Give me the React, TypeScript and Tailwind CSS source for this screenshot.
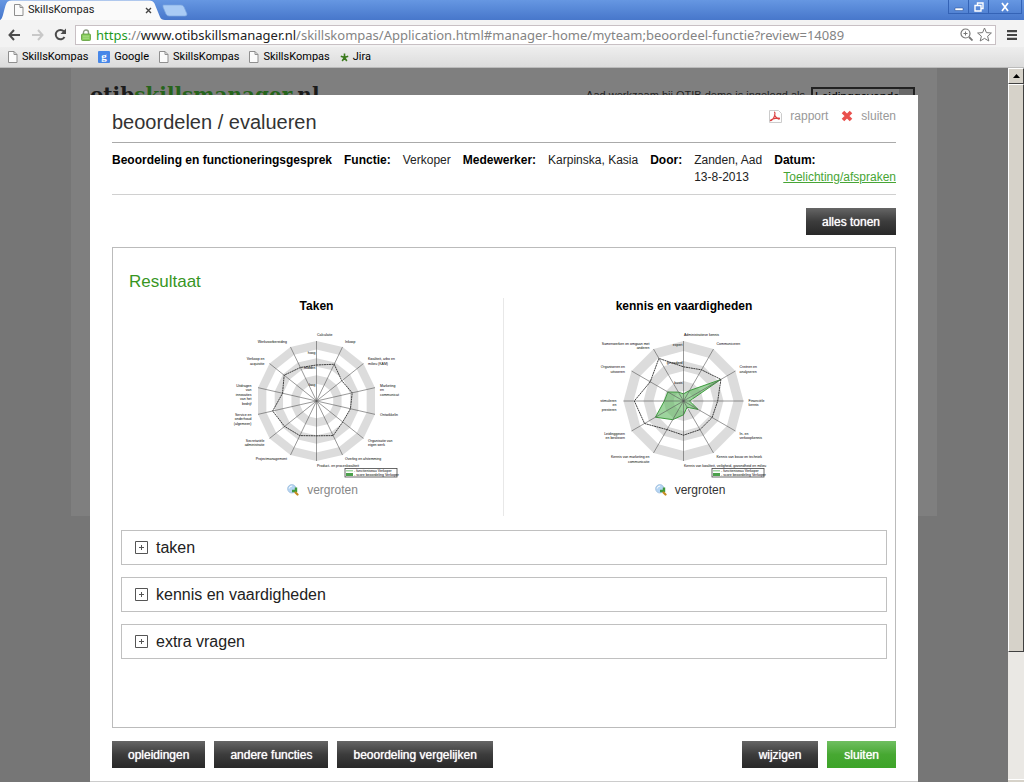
import React from "react";

type Anchor = "start" | "middle" | "end";
interface Label {
  x: number;
  y: number;
  anchor: Anchor;
  lines: string[];
}
interface RadarProps {
  title: string;
  axes: number;
  bands: number;
  cx: number;
  labels: Label[];
  scale: { y: number; text: string }[];
  line: number[];
  area?: number[];
}

// Chart units are half a pixel, so the small captions can use whole sizes.
const R = 120;
const CY = 146;

function points(values: number[], cx: number) {
  return values
    .map((v, i) => {
      const a = (i * 2 * Math.PI) / values.length;
      return `${(cx + Math.sin(a) * v * R).toFixed(1)},${(CY - Math.cos(a) * v * R).toFixed(1)}`;
    })
    .join(" ");
}

function Radar({ title, axes, bands, cx, labels, scale, line, area }: RadarProps) {
  const ring = (v: number) => points(Array(axes).fill(v), cx);
  const legendX = 246;
  return (
    <svg viewBox="0 0 380 304" className="block h-[152px] w-[190px] shrink-0" role="img" aria-label={title}>
      {Array.from({ length: bands }, (_, i) => (
        <polygon key={i} points={ring((bands - i) / bands)} fill={i % 2 || i === bands - 1 ? "#fff" : "#dcdcdc"} />
      ))}
      {area && <polygon points={points(area, cx)} fill="#5cb85c" fillOpacity="0.6" stroke="#3f9a3f" strokeWidth="2" />}
      {Array.from({ length: axes }, (_, i) => {
        const a = (i * 2 * Math.PI) / axes;
        return (
          <line key={i} x1={cx} y1={CY} x2={cx + Math.sin(a) * R} y2={CY - Math.cos(a) * R} stroke="#555" strokeWidth="1.2" />
        );
      })}
      <polygon points={points(line, cx)} fill="none" stroke="#222" strokeWidth="1.7" strokeDasharray="4 1" />
      <g fontSize="7" fill="#000" fontFamily="Liberation Sans, sans-serif">
        {scale.map((s) => (
          <text key={s.text} x={cx - 2} y={s.y} textAnchor="end">
            {s.text}
          </text>
        ))}
        {labels.map((l) =>
          l.lines.map((t, i) => (
            <text key={t} x={l.x} y={l.y + i * 9} textAnchor={l.anchor}>
              {t}
            </text>
          )),
        )}
        <rect x={legendX} y="281" width="104" height="17" fill="#fff" stroke="#444" strokeWidth="1.6" />
        <rect x={legendX + 2} y="284" width="14" height="3" fill="#a5d5a5" />
        <rect x={legendX + 2} y="290" width="14" height="6" fill="#4ba04b" />
        <text x={legendX + 18} y="288">- functieniveau Verkoper</text>
        <text x={legendX + 18} y="296">- score beoordeling Verkoper</text>
      </g>
    </svg>
  );
}

const taken: RadarProps = {
  title: "Taken",
  axes: 14,
  bands: 7,
  cx: 189,
  line: [0.6, 0.68, 0.54, 0.61, 0.58, 0.56, 0.64, 0.58, 0.64, 0.68, 0.75, 0.58, 0.69, 0.62],
  scale: [
    { y: 52, text: "hoog" },
    { y: 82, text: "midden" },
    { y: 116, text: "laag" },
  ],
  labels: [
    { x: 190, y: 15, anchor: "start", lines: ["Calculatie"] },
    { x: 246, y: 29, anchor: "start", lines: ["Inkoop"] },
    { x: 292, y: 64, anchor: "start", lines: ["Kwaliteit, arbo en", "milieu (KAM)"] },
    { x: 316, y: 117, anchor: "start", lines: ["Marketing", "en", "communicat"] },
    { x: 316, y: 175, anchor: "start", lines: ["Ontwikkelin"] },
    { x: 292, y: 227, anchor: "start", lines: ["Organisatie van", "eigen werk"] },
    { x: 246, y: 263, anchor: "start", lines: ["Overleg en afstemming"] },
    { x: 190, y: 277, anchor: "start", lines: ["Product- en proceskwaliteit"] },
    { x: 130, y: 263, anchor: "end", lines: ["Projectmanagement"] },
    { x: 85, y: 227, anchor: "end", lines: ["Secretariële", "administratie"] },
    { x: 59, y: 175, anchor: "end", lines: ["Service en", "onderhoud", "(algemeen)"] },
    { x: 59, y: 117, anchor: "end", lines: ["Uitdragen", "van", "innovaties", "van het", "bedrijf"] },
    { x: 85, y: 64, anchor: "end", lines: ["Verkoop en", "acquisitie"] },
    { x: 130, y: 29, anchor: "end", lines: ["Werkvoorbereiding"] },
  ],
};

const kennis: RadarProps = {
  title: "kennis en vaardigheden",
  axes: 12,
  bands: 6,
  cx: 189,
  line: [0.57, 0.6, 0.72, 0.57, 0.55, 0.55, 0.57, 0.55, 0.75, 0.82, 0.64, 0.82],
  area: [0.12, 0.2, 0.71, 0.1, 0.28, 0.12, 0.23, 0.36, 0.54, 0.32, 0.3, 0.17],
  scale: [
    { y: 36, text: "expert" },
    { y: 72, text: "gevorderd" },
    { y: 112, text: "basis" },
  ],
  labels: [
    { x: 190, y: 15, anchor: "start", lines: ["Administratieve kennis"] },
    { x: 255, y: 33, anchor: "start", lines: ["Communiceren"] },
    { x: 301, y: 80, anchor: "start", lines: ["Creëren en", "analyseren"] },
    { x: 319, y: 147, anchor: "start", lines: ["Financiële", "kennis"] },
    { x: 301, y: 213, anchor: "start", lines: ["In- en", "verkoopkennis"] },
    { x: 255, y: 260, anchor: "start", lines: ["Kennis van bouw en techniek"] },
    { x: 190, y: 277, anchor: "start", lines: ["Kennis van kwaliteit, veiligheid, gezondheid en milieu"] },
    { x: 121, y: 260, anchor: "end", lines: ["Kennis van marketing en", "communicatie"] },
    { x: 72, y: 213, anchor: "end", lines: ["Leidinggeven", "en beslissen"] },
    { x: 55, y: 147, anchor: "end", lines: ["stimuleren", "en", "presteren"] },
    { x: 72, y: 80, anchor: "end", lines: ["Organiseren en", "uitvoeren"] },
    { x: 121, y: 33, anchor: "end", lines: ["Samenwerken en omgaan met", "anderen"] },
  ],
};

function PageIcon() {
  return (
    <svg viewBox="0 0 10 12" className="h-3 w-[10px] shrink-0" aria-hidden="true">
      <path d="M.5.5h5.5l3 3v8H.5z" fill="#fbfbfb" stroke="#8f8f8f" />
      <path d="M6 .5v3h3" fill="none" stroke="#8f8f8f" />
    </svg>
  );
}

function MagnifierIcon() {
  return (
    <svg viewBox="0 0 12 12" className="size-3 shrink-0" aria-hidden="true">
      <circle cx="4.800" cy="4.800" r="4.200" fill="#b5d5f3" stroke="#9ab9d8" strokeWidth=".7" />
      <path d="M2.200 4.500a3 3 0 0 1 3-2.500" fill="none" stroke="#fff" strokeWidth="1" />
      <path d="M5 7h4V3.500" fill="none" stroke="#3f9a3d" strokeWidth="2.400" />
      <path d="M8.500 8.500l2 2" stroke="#c48a1d" strokeWidth="2.200" strokeLinecap="round" />
    </svg>
  );
}

function Bookmark({ label, icon }: { label: string; icon: React.ReactNode }) {
  return (
    <a href="#" className="flex items-center gap-1 whitespace-nowrap text-black">
      {icon}
      {label}
    </a>
  );
}

interface ActionButtonProps {
  children: React.ReactNode;
  green?: boolean;
  wide?: boolean;
}

function ActionButton({ children, green = false, wide = false }: ActionButtonProps) {
  const tone = green
    ? "from-[#6fbf60] via-[#47a832] to-[#3da428]"
    : "from-[#666] via-[#3c3c3c] to-[#282828]";
  return (
    <button
      type="button"
      className={`h-[27px] whitespace-nowrap bg-linear-to-b text-xs font-normal text-white [text-shadow:0_0_1px_#fff] ${wide ? "px-[17px]" : "px-4"} ${tone}`}
    >
      {children}
    </button>
  );
}

function ChartPanel({ chart, muted = false }: { chart: RadarProps; muted?: boolean }) {
  return (
    <section className="flex h-[218px] flex-col items-center">
      <h3 className="text-xs leading-4 font-bold text-black">{chart.title}</h3>
      <div className="mt-[14px]">
        <Radar {...chart} />
      </div>
      <button type="button" className={`mt-[2px] flex items-center gap-2 pl-3 text-xs leading-4 ${muted ? "text-[#888]" : "text-[#333]"}`}>
        <MagnifierIcon />
        vergroten
      </button>
    </section>
  );
}

function Browser() {
  return (
    <header className="font-['Roboto',sans-serif] text-[11px]">
      <div className="flex h-5 items-end bg-linear-to-b from-[#6697e2] to-[#4777cb]">
        <svg viewBox="0 0 190 20" className="h-5 w-[190px] shrink-0" aria-hidden="true">
          <path d="M0 20C4 19 4 4 8 1.500Q9 .5 12 .5H149Q153 .5 154.500 3.500L160 17Q161 20 165 20z" fill="#fafafa" />
          <path d="M163 5H181Q183 5 184 7L187 14Q187 16 185 16H169Q167 16 166 14L163 7z" fill="#a9cbf5" stroke="#7da7df" strokeWidth=".7" />
        </svg>
        <div className="-ml-[190px] flex h-5 w-[152px] items-center gap-1 pl-[14px]">
          <PageIcon />
          <span className="flex-1 leading-4">SkillsKompas</span>
          <button type="button" aria-label="Tabblad sluiten" className="text-[#444]">
            <svg viewBox="0 0 7 7" className="size-[7px]"><path d="M1 1l5 5M6 1L1 6" stroke="currentColor" strokeWidth="1.400" /></svg>
          </button>
        </div>
        <div className="mr-[2px] ml-auto flex h-[14px] self-start border border-t-0 border-[#3463b6] text-white">
          <button type="button" aria-label="Minimaliseren" className="flex w-5 items-center justify-center border-r border-[#3463b6]">
            <svg viewBox="0 0 10 10" className="size-[10px]"><path d="M1 6h8v2.500H1z" fill="#fff" stroke="#234a91" strokeWidth=".5" /></svg>
          </button>
          <button type="button" aria-label="Herstellen" className="flex w-5 items-center justify-center border-r border-[#3463b6]">
            <svg viewBox="0 0 10 10" className="size-[10px]" fill="none"><path d="M3.500 3V1h5.500v5.500H7M1 3.500h6V9H1z" stroke="#fff" strokeWidth="1.400" /></svg>
          </button>
          <button type="button" aria-label="Venster sluiten" className="flex w-8 items-center justify-center">
            <svg viewBox="0 0 10 10" className="size-[10px]"><path d="M2 1l6 8M8 1L2 9" stroke="#fff" strokeWidth="1.700" /></svg>
          </button>
        </div>
      </div>
      <div className="flex h-[27px] items-center bg-[#f3f3f3] pt-[2px] pl-2">
        <div className="flex w-[67px] items-center gap-[10px]">
          <button type="button" aria-label="Vorige">
            <svg viewBox="0 0 13 12" className="h-3 w-[13px]" fill="none"><path d="M6 1L1.500 6 6 11M1.500 6H12" stroke="#4c4c4c" strokeWidth="2" /></svg>
          </button>
          <button type="button" aria-label="Volgende">
            <svg viewBox="0 0 13 12" className="h-3 w-[13px]" fill="none"><path d="M7 1l4.500 5L7 11M11.500 6H1" stroke="#c8c8c8" strokeWidth="2" /></svg>
          </button>
          <button type="button" aria-label="Vernieuwen">
            <svg viewBox="0 0 13 13" className="size-[13px]"><path d="M10.500 9A4.700 4.700 0 1 1 10 3.500" fill="none" stroke="#4c4c4c" strokeWidth="2" /><path d="M12 .5V6H6.500z" fill="#4c4c4c" /></svg>
          </button>
        </div>
        <div className="flex h-5 flex-1 items-center border border-[#c8c0c4] bg-white pr-[3px] pl-[5px]">
          <svg viewBox="0 0 10 12" className="h-3 w-[10px] shrink-0" aria-hidden="true">
            <path d="M2.500 6V3.500a2.500 2.500 0 0 1 5 0V6" fill="none" stroke="#8a9a80" strokeWidth="1.400" />
            <rect x=".5" y="5" width="9" height="6.500" rx="1" fill="#86cc5a" stroke="#5d9c3a" strokeWidth=".8" />
            <path d="M2 7.200h6M2 9.200h6" stroke="#bce59f" strokeWidth=".7" />
          </svg>
          <span className="ml-[5px] flex-1 overflow-hidden font-['Noto_Sans',sans-serif] text-[13px] leading-[18px] whitespace-nowrap text-[#848484]">
            <span className="text-[#1f9a1f]">https</span>://<span className="text-[#222]">www.otibskillsmanager.nl</span>/skillskompas/Application.html#manager-home/myteam;beoordeel-functie?review=14089
          </span>
          <svg viewBox="0 0 13 13" className="size-[13px] shrink-0" fill="none" stroke="#777" aria-hidden="true">
            <circle cx="5.500" cy="5.500" r="4.500" strokeWidth="1.200" /><path d="M5.500 3.500v4M3.500 5.500h4" /><path d="M9 9l3.500 3.500" strokeWidth="1.800" />
          </svg>
          <svg viewBox="0 0 15 15" className="ml-1 size-[15px] shrink-0" fill="#fff" stroke="#777" aria-hidden="true">
            <path d="M7.500 1l1.900 4.600 5 .4-3.800 3.200 1.200 4.800-4.300-2.600L3.200 14l1.200-4.800L.6 6l5-.4z" />
          </svg>
        </div>
        <button type="button" aria-label="Menu" className="mr-[7px] ml-[11px]">
          <svg viewBox="0 0 10 10" className="size-[10px]"><path d="M0 1.200h10M0 5h10M0 8.800h10" stroke="#444" strokeWidth="2.200" /></svg>
        </button>
      </div>
      <nav className="flex h-[21px] items-center gap-[10px] border-b border-[#bbb] bg-linear-to-b from-[#eee] to-[#dcdcdc] pl-2">
        <Bookmark label="SkillsKompas" icon={<PageIcon />} />
        <Bookmark
          label="Google"
          icon={<svg viewBox="0 0 12 12" className="size-3" aria-hidden="true"><rect width="12" height="12" rx="1" fill="#4787e8" /><text x="6" y="9" fontSize="11" fontWeight="bold" fontFamily="Liberation Serif, serif" fill="#fff" textAnchor="middle">g</text></svg>}
        />
        <Bookmark label="SkillsKompas" icon={<PageIcon />} />
        <Bookmark label="SkillsKompas" icon={<PageIcon />} />
        <Bookmark
          label="Jira"
          icon={<svg viewBox="0 0 9 9" className="size-[9px]" aria-hidden="true"><path d="M4.500 4.500V.5M4.500 4.500L.8 3.300M4.500 4.500l3.700-1.200M4.500 4.500L2.200 8M4.500 4.500L6.800 8" stroke="#3a7a1c" strokeWidth="1.600" /></svg>}
        />
      </nav>
    </header>
  );
}

function Scrollbar() {
  return (
    <div className="flex w-4 shrink-0 flex-col bg-[#eae8e4]" aria-hidden="true">
      <div className="flex h-4 items-center justify-center border border-r-[#404040] border-b-[#404040] border-t-white border-l-white bg-[#d6d2c9]">
        <svg viewBox="0 0 7 4" className="h-1 w-[7px]"><path d="M3.500 0L7 4H0z" fill="#000" /></svg>
      </div>
      <div className="h-[568px] border border-r-[#404040] border-b-[#404040] border-t-white border-l-white bg-[#d6d2c9]" />
      <div className="mt-auto h-[3px] border-t border-white bg-[#d6d2c9]" />
    </div>
  );
}

export default function App() {
  return (
    <div className="flex min-h-screen flex-col font-['Liberation_Sans',Arial,sans-serif] text-xs text-[#222]">
      <Browser />
      <div className="flex flex-1">
        <div className="grid min-w-0 flex-1 bg-[#767676]">
          <div className="col-start-1 row-start-1 mx-auto h-[448px] w-full max-w-[866px] overflow-hidden bg-[#7f7f7f]">
            <div className="flex justify-between pt-[13px] pr-[22px] pl-[19px]">
              <div className="font-['DejaVu_Serif',serif] text-[20px] leading-7 font-bold text-[#1b1b1b]">
                otib<span className="text-[#26641b]">skillsmanager</span>.nl
              </div>
              <label className="flex items-start gap-[6px] pt-[6px] text-[11px] leading-4 text-[#222]">
                Aad werkzaam bij OTIB demo is ingelogd als
                <select className="h-5 w-[104px] appearance-none border-2 border-[#222] bg-[linear-gradient(90deg,#7f7f7f_86%,#686868_86%)] px-[2px] text-xs leading-4 text-black">
                  <option>Leidinggevende</option>
                </select>
              </label>
            </div>
          </div>
          <div role="dialog" aria-label="beoordelen / evalueren" className="col-start-1 row-start-1 mx-auto mt-[27px] w-full max-w-[828px] border-b border-[#ccc] bg-white px-[22px] pb-[13px]">
            <div className="flex h-12 items-start justify-between border-b border-[#aaa] pt-[13px]">
              <h1 className="text-[20px] leading-7 text-[#333]">beoordelen / evalueren</h1>
              <div className="flex text-xs leading-4 text-[#999]">
                <button type="button" className="flex h-4 items-center gap-2">
                  <svg viewBox="0 0 13 13" className="size-[13px]" aria-hidden="true">
                    <path d="M.5.5h9l3 3v9H.5z" fill="#fdfdfd" stroke="#ccc" />
                    <path d="M5 2c1.500 0 1 3 0 5.200S2 11 1.500 10.500 5 7.800 11 8.300M5.300 4.500C6.500 7 8 8.800 10.500 9.300" fill="none" stroke="#dc4040" strokeWidth="1.200" />
                  </svg>
                  rapport
                </button>
                <button type="button" className="ml-[13px] flex h-4 items-center gap-2">
                  <svg viewBox="0 0 12 12" className="size-3" aria-hidden="true"><path d="M2 2l8 8M10 2l-8 8" stroke="#e9504d" strokeWidth="3.600" /></svg>
                  sluiten
                </button>
              </div>
            </div>
            <dl className="flex h-[52px] gap-3 border-b border-[#d0d0d0] pt-[9px] leading-[17px] whitespace-nowrap text-black">
              <dt className="font-bold">Beoordeling en functioneringsgesprek</dt>
              <dt className="font-bold">Functie:</dt>
              <dd className="text-[#222]">Verkoper</dd>
              <dt className="font-bold">Medewerker:</dt>
              <dd className="text-[#222]">Karpinska, Kasia</dd>
              <dt className="font-bold">Door:</dt>
              <dd className="text-[#222]">Zanden, Aad<br />13-8-2013</dd>
              <div className="flex-1">
                <dt className="font-bold">Datum:</dt>
                <dd className="text-right">
                  <a href="#" className="text-[#47a535] underline">Toelichting/afspraken</a>
                </dd>
              </div>
            </dl>
            <div className="flex justify-end pt-[13px]">
              <ActionButton>alles tonen</ActionButton>
            </div>
            <div className="mt-3 border border-[#bbb] px-2 pb-[68px]">
              <h2 className="pt-[22px] pl-2 text-[17px] leading-6 text-[#38961f]">Resultaat</h2>
              <div className="mt-1 grid grid-cols-[374fr_360fr] pr-[23px] pl-[9px]">
                <div className="border-r border-[#e8e8e8]"><ChartPanel chart={taken} muted /></div>
                <ChartPanel chart={kennis} />
              </div>
              <div className="mt-[14px] flex flex-col gap-3">
                {["taken", "kennis en vaardigheden", "extra vragen"].map((t) => (
                  <button key={t} type="button" aria-expanded="false" className="flex h-[35px] items-center gap-2 border border-[#c0c0c0] px-[13px] text-left text-base text-[#222]">
                    <svg viewBox="0 0 13 13" className="size-[13px]" aria-hidden="true"><path d="M.5.5h12v12H.5zM4 6.500h5M6.500 4v5" fill="none" stroke="#555" /></svg>
                    {t}
                  </button>
                ))}
              </div>
            </div>
            <div className="mt-[13px] flex gap-[9px]">
              <ActionButton>opleidingen</ActionButton>
              <ActionButton>andere functies</ActionButton>
              <ActionButton>beoordeling vergelijken</ActionButton>
              <span className="flex-1" />
              <ActionButton wide>wijzigen</ActionButton>
              <ActionButton wide green>sluiten</ActionButton>
            </div>
          </div>
        </div>
        <Scrollbar />
      </div>
    </div>
  );
}
